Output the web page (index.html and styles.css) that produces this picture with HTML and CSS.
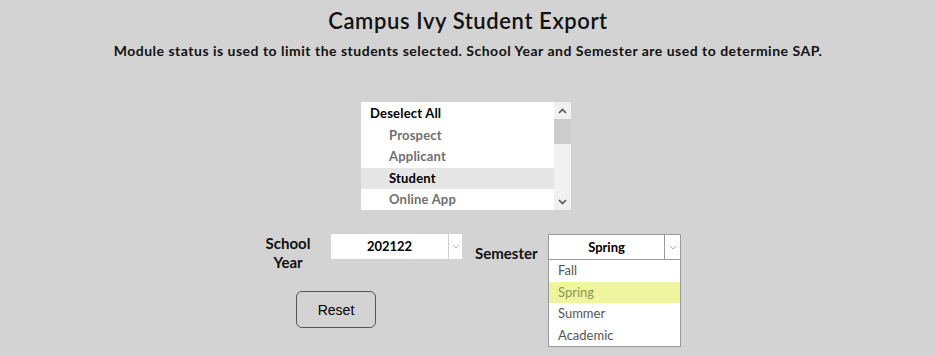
FILE: index.html
```html
<!DOCTYPE html>
<html lang="en">
<head>
    <meta charset="UTF-8">
    <title>Campus Ivy Student Export</title>
    <link rel="stylesheet" href="styles.css">
</head>
<body>

    <h2 class="title">Campus Ivy Student Export</h2>
    <p class="subtitle">Module status is used to limit the students selected. School Year and Semester are used to determine SAP.</p>

    <div class="listbox">
        <ul class="list-items">
            <li class="all">Deselect All</li>
            <li>Prospect</li>
            <li>Applicant</li>
            <li class="selected">Student</li>
            <li>Online App</li>
        </ul>
        <div class="scrollbar">
            <span class="arrow up"><svg width="9" height="6" viewBox="0 0 9 6"><path d="M1 5 L4.5 1.5 L8 5" fill="none" stroke="#555" stroke-width="1.6"/></svg></span>
            <span class="thumb"></span>
            <span class="arrow down"><svg width="9" height="6" viewBox="0 0 9 6"><path d="M1 1 L4.5 4.5 L8 1" fill="none" stroke="#555" stroke-width="1.6"/></svg></span>
        </div>
    </div>

    <div class="filters">
        <label class="field-label">School Year</label>
        <div class="select year">
            <span class="select-value">202122</span>
            <span class="select-btn"><svg width="8" height="5" viewBox="0 0 8 5"><path d="M1 1 L4 4 L7 1" fill="none" stroke="#b5b5b5" stroke-width="1"/></svg></span>
        </div>
        <label class="field-label semester-label">Semester</label>
        <div class="dropdown">
            <div class="select semester">
                <span class="select-value">Spring</span>
                <span class="select-btn"><svg width="8" height="5" viewBox="0 0 8 5"><path d="M1 1 L4 4 L7 1" fill="none" stroke="#b5b5b5" stroke-width="1"/></svg></span>
            </div>
            <ul class="options">
                <li>Fall</li>
                <li class="hover">Spring</li>
                <li>Summer</li>
                <li>Academic</li>
            </ul>
        </div>
    </div>

    <div class="actions">
        <button type="button" class="reset-btn">Reset</button>
    </div>

</body>
</html>
```

FILE: styles.css
```css
html, body {
    height: 100%;
}
body {
    margin: 0;
    background-color: #d3d3d3;
    font-family: Lato, "Noto Sans", sans-serif;
    color: #111;
}
.title {
    margin: 0;
    padding-top: 8px;
    text-align: center;
    font-size: 22px;
    font-weight: 600;
    letter-spacing: 0.6px;
    line-height: 26px;
}
.subtitle {
    margin: 8px 0 0;
    text-align: center;
    font-size: 14px;
    font-weight: 700;
    letter-spacing: 0.5px;
    line-height: 18px;
}
.listbox {
    display: flex;
    width: 210px;
    height: 108px;
    margin: 42px 0 0 361px;
    background: #fff;
}
.list-items {
    flex: 1;
    list-style: none;
    margin: 0;
    padding: 1px 0 0;
}
.list-items li {
    height: 21.5px;
    line-height: 21.5px;
    padding-left: 28px;
    font-size: 13px;
    font-weight: 700;
    letter-spacing: 0.2px;
    color: #6f6f6f;
}
.list-items li.all {
    padding-left: 9px;
    color: #000;
}
.list-items li.selected {
    background: #e6e6e6;
    color: #000;
}
.scrollbar {
    display: flex;
    flex-direction: column;
    width: 17px;
    background: #f1f1f1;
}
.arrow {
    display: flex;
    align-items: center;
    justify-content: center;
    height: 17px;
}
.thumb {
    height: 25px;
    background: #cdcdcd;
}
.arrow.down {
    margin-top: auto;
}
.filters {
    display: flex;
    align-items: flex-start;
    margin-top: 24px;
    padding-left: 258px;
}
.field-label {
    width: 60px;
    text-align: center;
    font-size: 15px;
    font-weight: 700;
    line-height: 19px;
}
.semester-label {
    width: 62px;
    margin: 10px 0 0 13px;
}
.select {
    display: flex;
    height: 25px;
    background: #fff;
    box-sizing: border-box;
}
.select.year {
    width: 131px;
    margin-left: 13px;
}
.select-value {
    flex: 1;
    text-align: center;
    line-height: 25px;
    font-size: 13px;
    font-weight: 700;
    color: #000;
}
.select-btn {
    display: flex;
    align-items: center;
    justify-content: center;
    width: 13px;
    border-left: 1px solid #cfcfcf;
}
.dropdown {
    position: relative;
    margin-left: 11px;
}
.select.semester {
    width: 133px;
    height: 26px;
    border: 1px solid #999;
}
.select.semester .select-value {
    line-height: 24px;
}
.select.semester .select-btn {
    width: 15px;
    border-left-color: #999;
}
.options {
    position: absolute;
    top: 26px;
    left: 0;
    width: 133px;
    box-sizing: border-box;
    margin: 0;
    padding: 0;
    list-style: none;
    background: #fff;
    border: 1px solid #999;
    border-top: none;
}
.options li {
    height: 21.5px;
    line-height: 21.5px;
    padding-left: 9px;
    font-size: 13px;
    color: #555;
}
.options li.hover {
    background: #eff59d;
    color: #8c9550;
}
.actions {
    padding: 19px 0 0 296px;
}
.reset-btn {
    width: 80px;
    height: 37px;
    background: transparent;
    border: 1px solid #555;
    border-radius: 6px;
    font-family: "Liberation Sans", Arial, sans-serif;
    font-size: 14px;
    color: #000;
}
```
